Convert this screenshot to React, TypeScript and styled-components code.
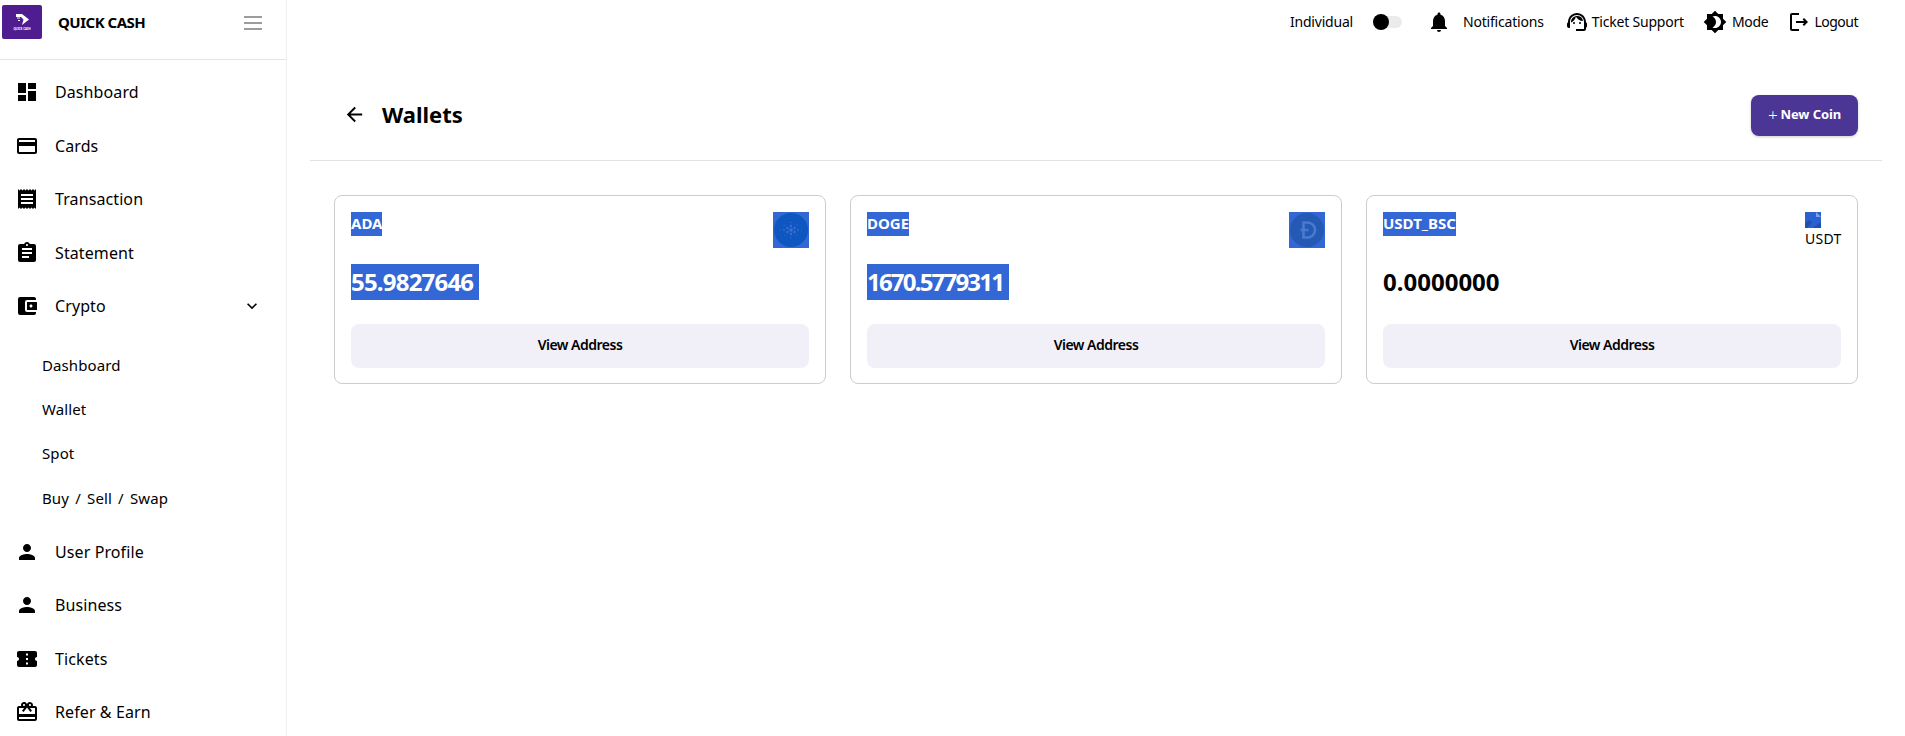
import React from "react";
import styled, { createGlobalStyle } from "styled-components";
import {
  MdDashboard,
  MdCreditCard,
  MdReceipt,
  MdAssignment,
  MdAccountBalanceWallet,
  MdPerson,
  MdConfirmationNumber,
  MdOutlineCardGiftcard,
  MdKeyboardArrowDown,
  MdNotifications,
  MdOutlineSupportAgent,
  MdBrightness4,
  MdOutlineLogout,
  MdArrowBack,
} from "react-icons/md";

const GlobalStyle = createGlobalStyle`
  html, body {
    margin: 0;
    padding: 0;
    background: #fff;
    color: #000;
    font-family: "Noto Sans", "Open Sans", sans-serif;
    overflow: hidden;
  }
`;

const Page = styled.div`
  display: flex;
  width: 1905px;
  height: 736px;
  overflow: hidden;
`;

const Sidebar = styled.aside`
  flex: 0 0 287px;
  height: 736px;
  box-sizing: border-box;
  border-right: 1px solid #f0f0f0;
  overflow: hidden;
`;

const Brand = styled.div`
  display: flex;
  align-items: center;
  height: 60px;
  padding: 0 24px 15px 2px;
  box-sizing: border-box;
  border-bottom: 1px solid #e4e4e4;
`;

const BrandName = styled.span`
  margin-left: 16px;
  font-size: 15px;
  font-weight: 700;
  letter-spacing: -0.5px;
  flex: 1;
`;

const Burger = styled.svg`
  width: 18px;
  height: 14px;
  margin-top: 2px;
`;

const Nav = styled.nav`
  padding-top: 5.5px;
`;

const NavItem = styled.div`
  display: flex;
  align-items: center;
  height: 53.5px;
  padding: 0 22px 0 15px;
  font-size: 16px;
  letter-spacing: 0.1px;
  svg {
    flex: 0 0 24px;
  }
`;

const NavLabel = styled.span`
  margin-left: 16px;
  flex: 1;
`;

const SubNav = styled.div`
  padding: 10px 0 5px;
`;

const SubItem = styled.div`
  display: flex;
  align-items: center;
  height: 44.2px;
  padding-left: 42px;
  font-size: 15px;
  letter-spacing: 0.1px;
  word-spacing: 2.2px;
`;

const Main = styled.main`
  flex: 1;
  min-width: 0;
`;

const TopBar = styled.header`
  display: flex;
  align-items: center;
  justify-content: flex-end;
  height: 44px;
  padding-right: 47px;
  font-size: 14px;
`;

const TopGroup = styled.div<{ $gap: number; $left: number }>`
  display: flex;
  align-items: center;
  gap: ${(p) => p.$gap}px;
  margin-left: ${(p) => p.$left}px;
`;

const TopText = styled.span<{ $tracking?: number }>`
  margin-top: -2px;
  letter-spacing: ${(p) => p.$tracking ?? -0.2}px;
`;

const Toggle = styled.span`
  position: relative;
  display: block;
  width: 29px;
  height: 12px;
  border-radius: 6px;
  background: #ebebeb;
  &::before {
    content: "";
    position: absolute;
    left: 0;
    top: -2px;
    width: 16px;
    height: 16px;
    border-radius: 50%;
    background: #000;
  }
`;

const PageHead = styled.div`
  display: flex;
  align-items: center;
  margin: 51px 23px 0 23px;
  padding: 0 24px 24px 33px;
  border-bottom: 1px solid #e2e2e2;
  svg {
    margin-top: -2px;
  }
`;

const Title = styled.h1`
  flex: 1;
  margin: -3px 0 0 16px;
  font-size: 22px;
  font-weight: 700;
  letter-spacing: 0;
  line-height: 41px;
`;

const NewCoin = styled.button`
  display: flex;
  align-items: center;
  justify-content: center;
  gap: 3px;
  width: 107px;
  height: 41px;
  border: 0;
  border-radius: 8px;
  padding: 0 0 3px;
  background: #4b3595;
  color: #fff;
  font-family: inherit;
  font-size: 13px;
  font-weight: 700;
  letter-spacing: -0.1px;
  box-shadow: 0 1px 3px rgba(0, 0, 0, 0.2);
`;

const Plus = styled.span`
  font-size: 17px;
  font-weight: 300;
  line-height: 17px;
`;

const CardGrid = styled.section`
  display: grid;
  grid-template-columns: repeat(3, 1fr);
  gap: 24px;
  margin: 34px 47px 0;
`;

const Card = styled.article`
  box-sizing: border-box;
  height: 189px;
  padding: 16px;
  border: 1px solid #cccccc;
  border-radius: 8px;
`;

const CardTop = styled.div`
  display: flex;
  justify-content: space-between;
  align-items: flex-start;
  height: 36px;
`;

const Symbol = styled.span`
  display: block;
  height: 24px;
  background: #3367d6;
  color: #fff;
  font-size: 15px;
  font-weight: 700;
  line-height: 22px;
  letter-spacing: 0;
`;

const Amount = styled.div`
  margin-top: 16px;
  height: 36px;
`;

const AmountText = styled.span<{ $selected: boolean; $tracking: number }>`
  display: inline-block;
  height: 36px;
  padding-right: ${(p) => (p.$selected ? 6 : 0)}px;
  font-size: 24px;
  font-weight: 700;
  line-height: 35px;
  letter-spacing: ${(p) => p.$tracking}px;
  ${(p) => p.$selected && "background: #3367d6; color: #fff;"}
`;

const ViewAddress = styled.button`
  display: block;
  width: 100%;
  height: 44px;
  margin-top: 24px;
  padding: 0 0 3px;
  border: 0;
  border-radius: 8px;
  background: #f1f0f9;
  color: #000;
  font-family: inherit;
  font-size: 14px;
  font-weight: 600;
  letter-spacing: -0.5px;
`;

const BrokenImage = styled.div`
  width: 36px;
  font-size: 14px;
  line-height: 20px;
  letter-spacing: 0.3px;
  svg {
    display: block;
    margin-bottom: 1px;
  }
`;

const Logo = () => (
  <svg width="40" height="34" viewBox="0 0 40 34">
    <rect width="40" height="34" rx="2" fill="#4f1d8f" />
    <path d="M14 9h6l7 5.5-7 5.5 1.5-5.5L19 12h-5z" fill="#fff" />
    <path d="M15 13h3M16 15.500h2" stroke="#fff" strokeWidth="1" />
    <text x="20" y="24.500" fontSize="2.800" fontWeight="700" fill="#fff" textAnchor="middle">
      QUICK CASH
    </text>
  </svg>
);

const dots: Array<[number, number, number]> = [
  [18, 18, 1.8], [14.500, 16, 1.2], [21.500, 16, 1.2], [14.500, 20, 1.2], [21.500, 20, 1.2],
  [18, 14, 1.2], [18, 22, 1.2], [11, 18, 0.9], [25, 18, 0.9], [18, 10.500, 0.7], [18, 25.500, 0.7],
  [12, 13, 0.6], [24, 13, 0.6], [12, 23, 0.6], [24, 23, 0.6], [7.500, 18, 0.5], [28.500, 18, 0.5],
];

const AdaIcon = () => (
  <svg width="36" height="36" viewBox="0 0 36 36">
    <rect width="36" height="36" fill="#3367d6" />
    <circle cx="18" cy="18" r="17" fill="#0e57c0" />
    {dots.map(([x, y, r], i) => (
      <circle key={i} cx={x} cy={y} r={r} fill="#3a70d2" />
    ))}
  </svg>
);

const DogeIcon = () => (
  <svg width="36" height="36" viewBox="0 0 36 36">
    <rect width="36" height="36" fill="#3367d6" />
    <circle cx="18" cy="18" r="17" fill="#2459b4" />
    <path
      d="M14.500 10.500h4a7.500 7.500 0 0 1 0 15h-4zM11.500 18h8"
      fill="none"
      stroke="#4a79cf"
      strokeWidth="2.600"
    />
  </svg>
);

const BrokenIcon = () => (
  <svg width="16" height="16" viewBox="0 0 16 16">
    <rect width="16" height="16" fill="#2a60cf" />
    <path d="M11 0l5 5h-5z" fill="#7fa0e4" />
    <path d="M0 16V11L4 8l3 2-5 6z M8 16l8-6v6z" fill="#1f4faf" />
  </svg>
);

type Coin = {
  symbol: string;
  amount: string;
  selected: boolean;
  tracking: number;
  icon: React.ReactNode;
};

const coins: Coin[] = [
  { symbol: "ADA", amount: "55.9827646", selected: true, tracking: -0.8, icon: <AdaIcon /> },
  { symbol: "DOGE", amount: "1670.5779311", selected: true, tracking: -1.8, icon: <DogeIcon /> },
  {
    symbol: "USDT_BSC",
    amount: "0.0000000",
    selected: false,
    tracking: 0,
    icon: (
      <BrokenImage>
        <BrokenIcon />
        USDT
      </BrokenImage>
    ),
  },
];

function App() {
  return (
    <Page>
      <GlobalStyle />
      <Sidebar>
        <Brand>
          <Logo />
          <BrandName>QUICK CASH</BrandName>
          <Burger viewBox="0 0 18 14">
            <path d="M0 1h18M0 7h18M0 13h18" stroke="#7c7c7c" strokeWidth="1.500" />
          </Burger>
        </Brand>
        <Nav>
          <NavItem><MdDashboard size={24} /><NavLabel>Dashboard</NavLabel></NavItem>
          <NavItem><MdCreditCard size={24} /><NavLabel>Cards</NavLabel></NavItem>
          <NavItem><MdReceipt size={24} /><NavLabel>Transaction</NavLabel></NavItem>
          <NavItem><MdAssignment size={24} /><NavLabel>Statement</NavLabel></NavItem>
          <NavItem>
            <MdAccountBalanceWallet size={24} />
            <NavLabel>Crypto</NavLabel>
            <MdKeyboardArrowDown size={20} />
          </NavItem>
          <SubNav>
            <SubItem>Dashboard</SubItem>
            <SubItem>Wallet</SubItem>
            <SubItem>Spot</SubItem>
            <SubItem>Buy / Sell / Swap</SubItem>
          </SubNav>
          <NavItem><MdPerson size={24} /><NavLabel>User Profile</NavLabel></NavItem>
          <NavItem><MdPerson size={24} /><NavLabel>Business</NavLabel></NavItem>
          <NavItem><MdConfirmationNumber size={24} /><NavLabel>Tickets</NavLabel></NavItem>
          <NavItem><MdOutlineCardGiftcard size={24} /><NavLabel>Refer &amp; Earn</NavLabel></NavItem>
        </Nav>
      </Sidebar>
      <Main>
        <TopBar>
          <TopGroup $gap={20} $left={0}>
            <TopText>Individual</TopText>
            <Toggle />
          </TopGroup>
          <TopGroup $gap={12} $left={25}>
            <MdNotifications size={24} />
            <TopText>Notifications</TopText>
          </TopGroup>
          <TopGroup $gap={3} $left={21}>
            <MdOutlineSupportAgent size={24} />
            <TopText>Ticket Support</TopText>
          </TopGroup>
          <TopGroup $gap={5} $left={19}>
            <MdBrightness4 size={24} />
            <TopText $tracking={-0.3}>Mode</TopText>
          </TopGroup>
          <TopGroup $gap={3} $left={19}>
            <MdOutlineLogout size={24} />
            <TopText $tracking={-0.5}>Logout</TopText>
          </TopGroup>
        </TopBar>
        <PageHead>
          <MdArrowBack size={23} />
          <Title>Wallets</Title>
          <NewCoin>
            <Plus>+</Plus>
            <span>New Coin</span>
          </NewCoin>
        </PageHead>
        <CardGrid>
          {coins.map((coin) => (
            <Card key={coin.symbol}>
              <CardTop>
                <Symbol>{coin.symbol}</Symbol>
                {coin.icon}
              </CardTop>
              <Amount>
                <AmountText $selected={coin.selected} $tracking={coin.tracking}>
                  {coin.amount}
                </AmountText>
              </Amount>
              <ViewAddress>View Address</ViewAddress>
            </Card>
          ))}
        </CardGrid>
      </Main>
    </Page>
  );
}

export default App;
